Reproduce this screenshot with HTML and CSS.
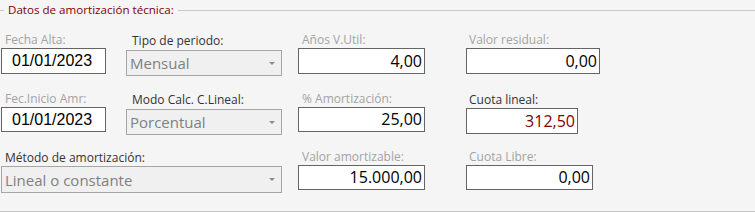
FILE: index.html
```html
<!DOCTYPE html>
<html lang="es">
<head>
  <meta charset="UTF-8">
  <title>Datos de amortización técnica</title>
  <link rel="stylesheet" href="styles.css">
</head>
<body>
  <div class="group">
    <div class="legend"><span>Datos de amortización técnica:</span></div>

    <div class="grid">
      <!-- fila 1 -->
      <div class="field c1">
        <label class="off">Fecha Alta:</label>
        <div class="box date tall">01/01/2023</div>
      </div>
      <div class="field c2">
        <label class="on low">Tipo de periodo:</label>
        <div class="combo">
          <span>Mensual</span><i class="arrow"></i>
        </div>
      </div>
      <div class="field c3">
        <label class="off">Años V.Util:</label>
        <div class="box num tall">4,00</div>
      </div>
      <div class="field c4">
        <label class="off">Valor residual:</label>
        <div class="box num tall wide">0,00</div>
      </div>

      <!-- fila 2 -->
      <div class="field c1">
        <label class="off">Fec.Inicio Amr:</label>
        <div class="box date">01/01/2023</div>
      </div>
      <div class="field c2">
        <label class="on low">Modo Calc. C.Lineal:</label>
        <div class="combo">
          <span>Porcentual</span><i class="arrow"></i>
        </div>
      </div>
      <div class="field c3">
        <label class="off">% Amortización:</label>
        <div class="box num">25,00</div>
      </div>
      <div class="field c4">
        <label class="on low">Cuota lineal:</label>
        <div class="box num tall short red">312,50</div>
      </div>

      <!-- fila 3 -->
      <div class="field span12">
        <label class="on">Método de amortización:</label>
        <div class="combo">
          <span>Lineal o constante</span><i class="arrow"></i>
        </div>
      </div>
      <div class="field c3">
        <label class="off up">Valor amortizable:</label>
        <div class="box num">15.000,00</div>
      </div>
      <div class="field c4">
        <label class="off up">Cuota Libre:</label>
        <div class="box num">0,00</div>
      </div>
    </div>
  </div>
</body>
</html>
```

FILE: styles.css
```css
body {
  margin: 0;
  background: #f5f5f5;
  font-family: 'Open Sans', 'Noto Sans', sans-serif;
}
.group {
  height: 212px;
  box-sizing: border-box;
  border-bottom: 1px solid #c8c8c8;
}
.legend {
  display: flex;
  align-items: center;
  height: 20px;
  gap: 4px;
}
.legend::before,
.legend::after {
  content: '';
  border-top: 1px solid #c8c8c8;
}
.legend::before {
  width: 4px;
}
.legend::after {
  flex: 1;
}
.legend span {
  font-size: 11.6px;
  color: #800000;
  line-height: 20px;
}
.grid {
  display: grid;
  grid-template-columns: 125px 172px 168px 1fr;
  grid-template-rows: 59px 59px 59px;
  margin-top: 11px;
  padding-left: 1px;
}
.field {
  display: flex;
  flex-direction: column;
  align-items: flex-start;
}
.c1 { grid-column: 1; }
.c2 { grid-column: 2; }
.c3 { grid-column: 3; }
.c4 { grid-column: 4; }
.span12 { grid-column: 1 / 3; }

label {
  height: 17px;
  line-height: 17px;
  font-size: 12px;
  padding-left: 4px;
  white-space: nowrap;
}
label.off { color: #a3a3a3; }
label.on { color: #333333; }
.c2 label { padding-left: 6px; }
.c4 label { padding-left: 3px; }
label.low { padding-top: 2px; height: 16px; line-height: 16px; }
label.up { margin-top: -1px; }

.box {
  box-sizing: border-box;
  height: 25px;
  width: 127px;
  border: 1px solid #646464;
  background: #ffffff;
  color: #000000;
  font-size: 16px;
  line-height: 23px;
  white-space: nowrap;
}
.box.tall { height: 26px; line-height: 24px; }
.box.date {
  width: 105px;
  padding-left: 10px;
  font-family: 'Liberation Sans', Arial, sans-serif;
}
.box.num {
  text-align: right;
  padding-right: 2px;
}
.box.wide { width: 134px; }
.box.short { width: 112px; }
.box.red { color: #800000; }

.combo {
  box-sizing: border-box;
  display: flex;
  align-items: center;
  justify-content: space-between;
  width: 156px;
  height: 26px;
  margin-top: 1px;
  padding: 0 6px 0 3px;
  border: 1px solid #a6a6a6;
  background: #f0f0f0;
  color: #808080;
  font-size: 15px;
}
.span12 .combo {
  width: 281px;
  height: 27px;
  margin-top: 0;
}
.arrow {
  width: 0;
  height: 0;
  border-left: 3px solid transparent;
  border-right: 3px solid transparent;
  border-top: 3px solid #8c8c8c;
}
```
